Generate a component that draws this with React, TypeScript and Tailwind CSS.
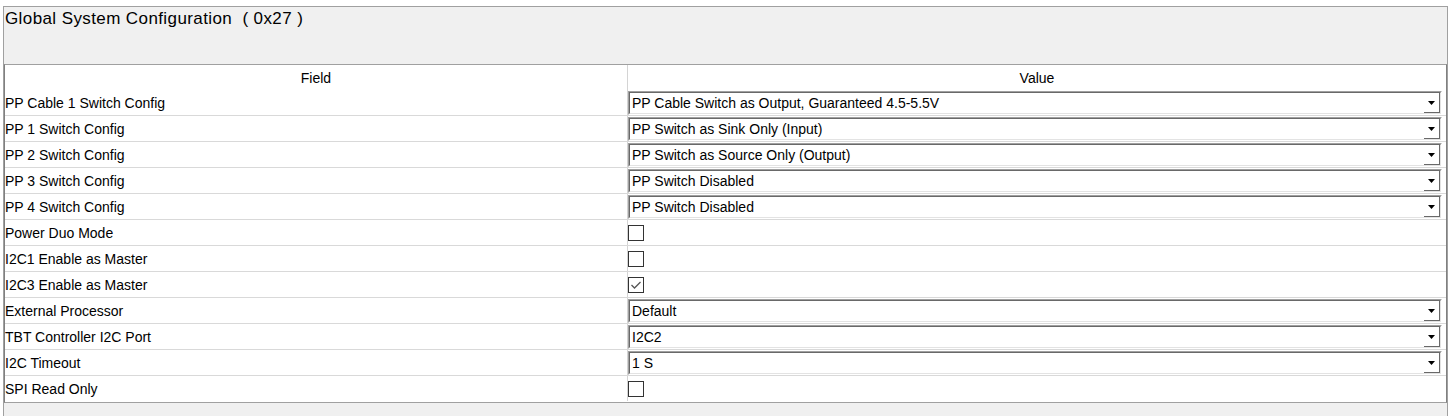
import React from "react";

type Row = { label: string; kind: "select" | "check"; value?: string; checked?: boolean };

const rows: Row[] = [
  { label: "PP Cable 1 Switch Config", kind: "select", value: "PP Cable Switch as Output, Guaranteed 4.5-5.5V" },
  { label: "PP 1 Switch Config", kind: "select", value: "PP Switch as Sink Only (Input)" },
  { label: "PP 2 Switch Config", kind: "select", value: "PP Switch as Source Only (Output)" },
  { label: "PP 3 Switch Config", kind: "select", value: "PP Switch Disabled" },
  { label: "PP 4 Switch Config", kind: "select", value: "PP Switch Disabled" },
  { label: "Power Duo Mode", kind: "check", checked: false },
  { label: "I2C1 Enable as Master", kind: "check", checked: false },
  { label: "I2C3 Enable as Master", kind: "check", checked: true },
  { label: "External Processor", kind: "select", value: "Default" },
  { label: "TBT Controller I2C Port", kind: "select", value: "I2C2" },
  { label: "I2C Timeout", kind: "select", value: "1 S" },
  { label: "SPI Read Only", kind: "check", checked: false },
];

function Select({ value }: { value: string }) {
  return (
    <div className="w-[814px] h-[24px] border-t border-l border-[#a0a0a0] border-r border-b border-r-white border-b-white">
      <div className="h-full flex border-t border-l border-[#696969] border-r border-b border-r-[#e3e3e3] border-b-[#e3e3e3] bg-white">
        <div className="flex-1 pl-[2px] pt-[1px] flex items-center leading-none">{value}</div>
        <div className="w-[16px] h-full flex items-center justify-center border-r border-b border-[#696969]">
          <svg width="7" height="4" viewBox="0 0 7 4" className="mt-[1px]">
            <path d="M0 0H7L3.5 4Z" fill="#000" />
          </svg>
        </div>
      </div>
    </div>
  );
}

function Check({ checked }: { checked: boolean }) {
  return (
    <div className="w-[16px] h-[16px] border border-[#333333] bg-white flex items-center justify-center">
      {checked && (
        <svg width="12" height="10" viewBox="0 0 12 10">
          <path d="M1.5 5L4.5 8L10.5 2" fill="none" stroke="#555555" strokeWidth="1.3" />
        </svg>
      )}
    </div>
  );
}

export default function App() {
  return (
    <div
      className="w-[1449px] h-[416px] bg-white overflow-hidden text-[14px] text-black"
      style={{ fontFamily: '"Liberation Sans", Arial, sans-serif' }}
    >
      <div className="ml-[3px] mt-[6px] w-[1445px] h-[410px] border-l border-t border-r border-[#a0a0a0] bg-[#f0f0f0] flex flex-col">
        <div className="h-[57px] pl-[1px] pt-[2px] text-[17px] tracking-[0.4px] whitespace-pre leading-[20px]">
          Global System Configuration  ( 0x27 )
        </div>
        <div className="border-t border-[#a0a0a0] border-l border-r border-l-[#808080] border-r-[#808080] border-b border-b-[#a0a0a0] bg-white">
          <div className="flex h-[25px] items-center">
            <div className="w-[623px] h-full pt-[1px] flex items-center justify-center border-r border-[#d4d4d4]">Field</div>
            <div className="flex-1 h-full pt-[1px] flex items-center justify-center">Value</div>
          </div>
          {rows.map((r, i) => (
            <div key={i} className={`flex h-[26px] ${i < rows.length - 1 ? "border-b border-[#d9d9d9]" : ""}`}>
              <div className="w-[623px] h-[25px] pt-[1px] flex items-center border-r border-[#d4d4d4] whitespace-pre">{r.label}</div>
              <div className="flex-1 h-[25px] flex items-center">
                {r.kind === "select" ? <Select value={r.value!} /> : <Check checked={!!r.checked} />}
              </div>
            </div>
          ))}
        </div>
      </div>
    </div>
  );
}
